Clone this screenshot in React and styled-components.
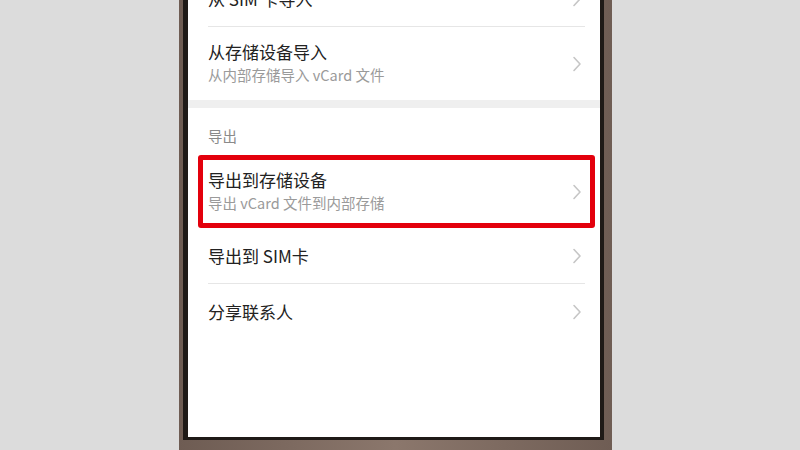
import React from "react";
import styled, { createGlobalStyle } from "styled-components";

const Global = createGlobalStyle`
  html, body { margin: 0; padding: 0; }
  body {
    width: 800px;
    height: 450px;
    overflow: hidden;
    background: #dcdcdc;
    font-family: "Noto Sans CJK SC", "Noto Sans", sans-serif;
  }
`;

const Stage = styled.div`
  width: 800px;
  height: 450px;
  display: flex;
  overflow: hidden;
  background: #dcdcdc;
`;

const PhoneBody = styled.div`
  margin-left: 179px;
  width: 433px;
  height: 470px;
  box-sizing: border-box;
  padding: 0 8px 0 4px;
  background: linear-gradient(90deg, #6e5c53 0%, #8b776c 50%, #6f5d54 100%);
  display: flex;
`;

const Bezel = styled.div`
  flex: 1;
  height: 440px;
  box-sizing: border-box;
  padding: 0 4px 3px 5px;
  background: #1f1a17;
  display: flex;
`;

const Screen = styled.div`
  flex: 1;
  background: #ffffff;
  overflow: hidden;
  display: flex;
  flex-direction: column;
`;

const List = styled.div`
  margin-top: -29px;
  display: flex;
  flex-direction: column;
`;

const Row = styled.div`
  position: relative;
  height: ${(p) => (p.$tall ? 73 : 55)}px;
  flex-shrink: 0;
  display: flex;
  align-items: center;
  padding: 0 18px 0 20px;
  box-sizing: border-box;
`;

const Divider = styled.div`
  height: 1px;
  background: #e6e6e6;
  margin: 0 15px 0 20px;
  flex-shrink: 0;
`;

const Band = styled.div`
  height: 8px;
  background: #efefef;
  flex-shrink: 0;
`;

const Header = styled.div`
  height: 47px;
  flex-shrink: 0;
  box-sizing: border-box;
  padding: 0 20px 9px;
  display: flex;
  align-items: flex-end;
  font-size: 14.5px;
  line-height: 20px;
  color: #8a8a8a;
`;

const Texts = styled.div`
  flex: 1;
  display: flex;
  flex-direction: column;
  margin-top: ${(p) => (p.$tall ? "-2px" : "0")};
`;

const Title = styled.div`
  font-size: 17px;
  line-height: 24px;
  color: #222222;
  white-space: nowrap;
`;

const Sub = styled.div`
  font-size: 14.5px;
  line-height: 22px;
  color: #9a9a9a;
  white-space: nowrap;
`;

const Highlight = styled.div`
  position: absolute;
  left: 10px;
  right: 5px;
  top: 0;
  bottom: 0;
  border: 5px solid #e3000c;
  border-radius: 3px;
  pointer-events: none;
`;

const Chevron = () => (
  <svg width="10" height="16" viewBox="0 0 10 16" fill="none">
    <path d="M2 1.5 L8 8 L2 14.5" stroke="#c6c6c6" strokeWidth="1.6" strokeLinecap="round" strokeLinejoin="round" />
  </svg>
);

function Item({ title, sub, highlight }) {
  return (
    <Row $tall={!!sub}>
      <Texts $tall={!!sub}>
        <Title>{title}</Title>
        {sub && <Sub>{sub}</Sub>}
      </Texts>
      <Chevron />
      {highlight && <Highlight />}
    </Row>
  );
}

export default function App() {
  return (
    <>
      <Global />
      <Stage>
        <PhoneBody>
          <Bezel>
            <Screen>
              <List>
                <Item title="从 SIM 卡导入" />
                <Divider />
                <Item title="从存储设备导入" sub="从内部存储导入 vCard 文件" />
                <Band />
                <Header>导出</Header>
                <Item title="导出到存储设备" sub="导出 vCard 文件到内部存储" highlight />
                <Item title="导出到 SIM卡" />
                <Divider />
                <Item title="分享联系人" />
              </List>
            </Screen>
          </Bezel>
        </PhoneBody>
      </Stage>
    </>
  );
}
